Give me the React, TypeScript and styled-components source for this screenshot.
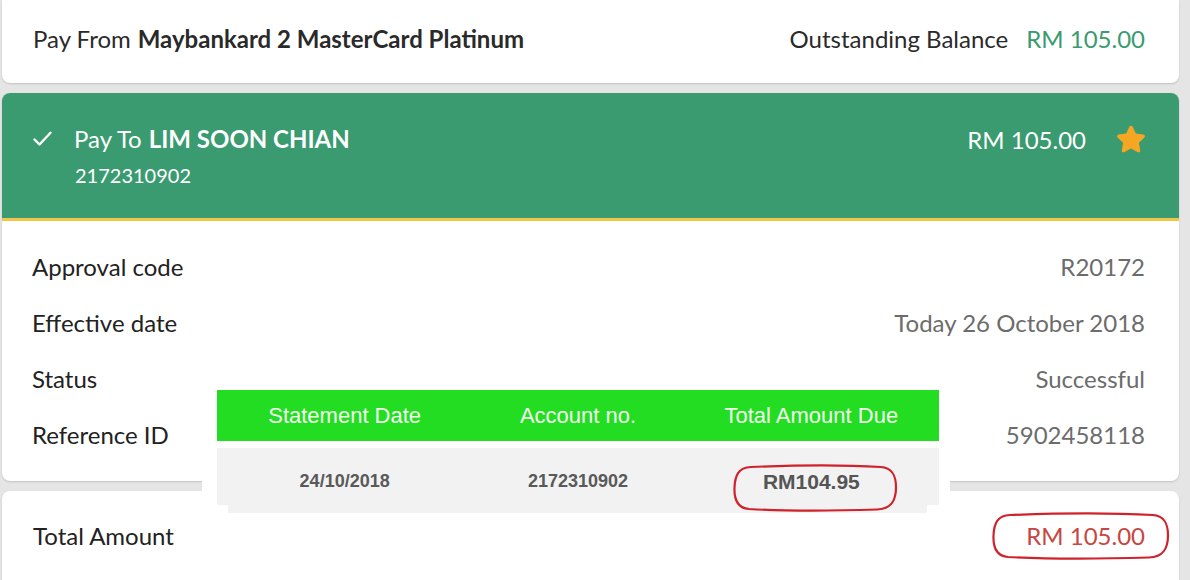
import React from "react";
import styled, { createGlobalStyle } from "styled-components";
import { FaStar } from "react-icons/fa";

const Global = createGlobalStyle`
  html, body { margin: 0; padding: 0; }
  body {
    background: #e5e5e5;
    font-family: Lato, "Open Sans", sans-serif;
    overflow: hidden;
  }
`;

const Page = styled.div`
  position: relative;
  width: 1190px;
  height: 580px;
  overflow: hidden;
  padding-left: 2px;
  box-sizing: border-box;
`;

const Stack = styled.div`
  width: 1177px;
  display: flex;
  flex-direction: column;
  gap: 10px;
`;

const Card = styled.div<{ $top?: boolean }>`
  background: #fff;
  border-radius: ${(p) => (p.$top ? "0 0 8px 8px" : "8px")};
  box-shadow: 0 1px 2px rgba(0, 0, 0, 0.16);
  overflow: hidden;
`;

const Bar = styled.div<{ $h: number; $pt: number }>`
  height: ${(p) => p.$h}px;
  box-sizing: border-box;
  padding: ${(p) => p.$pt}px 34px 0 31px;
  display: flex;
  justify-content: space-between;
  align-items: flex-start;
  font-size: 24px;
  line-height: 30px;
  color: #2a2a2a;
`;

const Group = styled.div`
  display: flex;
  align-items: baseline;
  gap: 7px;
  white-space: nowrap;
`;

const Strong = styled.span`
  font-weight: 700;
`;

const Amount = styled.span<{ $color: string }>`
  color: ${(p) => p.$color};
  margin-left: 11px;
`;

const Header = styled.div`
  height: 128px;
  box-sizing: border-box;
  background: #3a9a70;
  border-bottom: 3px solid #f0c744;
  padding: 31px 33px 0 30px;
  display: flex;
  justify-content: space-between;
  color: #fff;
`;

const HeaderLeft = styled.div`
  display: flex;
  gap: 22px;
`;

const CheckBox = styled.div`
  height: 30px;
  display: flex;
  align-items: center;
`;

const HeaderText = styled.div`
  display: flex;
  flex-direction: column;
`;

const Title = styled.div`
  font-size: 24px;
  line-height: 30px;
  white-space: nowrap;
  & > span + span { margin-left: 7px; }
`;

const SubTitle = styled.div`
  font-size: 20px;
  line-height: 26px;
  margin-top: 8px;
  padding-left: 1px;
`;

const HeaderRight = styled.div`
  display: flex;
  align-items: center;
  gap: 30px;
  height: 30px;
  font-size: 24px;
`;

const Details = styled.div`
  padding: 17px 34px 19px 30px;
`;

const DetailRow = styled.div`
  height: 56px;
  display: flex;
  align-items: center;
  justify-content: space-between;
  font-size: 24px;
`;

const Label = styled.span`
  color: #222;
`;

const Value = styled.span`
  color: #6c6c6c;
`;

const TotalBar = styled.div`
  height: 100px;
  box-sizing: border-box;
  padding: 30px 34px 0 31px;
  display: flex;
  justify-content: space-between;
  font-size: 24px;
  line-height: 30px;
`;

/* pasted screenshot overlay */
const Overlay = styled.div`
  position: absolute;
  left: 202px;
  top: 382px;
  width: 748px;
  height: 131px;
  background: #fff;
  padding: 8px 11px 0 15px;
  box-sizing: border-box;
  font-family: "Liberation Sans", Arial, sans-serif;
`;

const TableHead = styled.div`
  height: 51px;
  background: #22dd22;
  display: grid;
  grid-template-columns: repeat(3, 1fr);
  padding: 0 11px;
  align-items: center;
  color: #f3fdee;
  font-size: 22px;
  text-align: center;
`;

const TableRow = styled.div`
  position: relative;
  margin-top: 7px;
  height: 57px;
  background: #f2f2f2;
  display: grid;
  grid-template-columns: repeat(3, 1fr);
  padding: 0 11px;
  align-items: center;
  text-align: center;
  color: #595959;
  font-weight: 700;
  font-size: 18px;
  &::after {
    content: "";
    position: absolute;
    left: 11px;
    right: 12px;
    bottom: -8px;
    height: 8px;
    background: #f2f2f2;
  }
`;

const Cell = styled.div<{ $big?: boolean }>`
  font-size: ${(p) => (p.$big ? "21px" : "inherit")};
  color: ${(p) => (p.$big ? "#555" : "inherit")};
  padding-top: 10px;
`;

const Circle = styled.svg`
  position: absolute;
  overflow: visible;
  pointer-events: none;
`;

const Mark = ({ x, y, w, h }: { x: number; y: number; w: number; h: number }) => (
  <Circle style={{ left: x, top: y, width: w, height: h }} viewBox={`0 0 ${w} ${h}`}>
    <path
      d={`M ${18} 3 C ${w * 0.4} 1, ${w * 0.7} 1, ${w - 16} 3 C ${w - 3} 4, ${w - 1} 14, ${w - 1} ${h / 2} C ${w - 1} ${h - 10}, ${w - 6} ${h - 2}, ${w - 20} ${h - 1.5} C ${w * 0.6} ${h}, ${w * 0.3} ${h}, 16 ${h - 2} C 4 ${h - 3}, 1 ${h - 12}, 1.5 ${h / 2} C 2 12, 5 3.5, 18 3 Z`}
      fill="none"
      stroke="#d0222b"
      strokeWidth="2.2"
    />
  </Circle>
);

export default function App() {
  return (
    <>
      <Global />
      <Page>
        <Stack>
          <Card $top>
            <Bar $h={83} $pt={24}>
              <Group>
                <span>Pay From</span>
                <Strong>Maybankard 2 MasterCard Platinum</Strong>
              </Group>
              <Group>
                <span>Outstanding Balance</span>
                <Amount $color="#3a9a70">RM 105.00</Amount>
              </Group>
            </Bar>
          </Card>

          <Card>
            <Header>
              <HeaderLeft>
                <CheckBox>
                  <svg width="20" height="16" viewBox="0 0 20 16">
                    <polyline points="2.5,8.5 7.5,13.5 18.5,1.8" fill="none" stroke="#fff" strokeWidth="2.4" strokeLinecap="round" strokeLinejoin="round" />
                  </svg>
                </CheckBox>
                <HeaderText>
                  <Title>
                    <span>Pay To</span>
                    <Strong>LIM SOON CHIAN</Strong>
                  </Title>
                  <SubTitle>2172310902</SubTitle>
                </HeaderText>
              </HeaderLeft>
              <HeaderRight>
                <span>RM 105.00</span>
                <FaStar size={30} color="#f5a623" />
              </HeaderRight>
            </Header>
            <Details>
              <DetailRow><Label>Approval code</Label><Value>R20172</Value></DetailRow>
              <DetailRow><Label>Effective date</Label><Value>Today 26 October 2018</Value></DetailRow>
              <DetailRow><Label>Status</Label><Value>Successful</Value></DetailRow>
              <DetailRow><Label>Reference ID</Label><Value>5902458118</Value></DetailRow>
            </Details>
          </Card>

          <Card>
            <TotalBar>
              <Label>Total Amount</Label>
              <Amount $color="#c8463f">RM 105.00</Amount>
            </TotalBar>
          </Card>
        </Stack>

        <Overlay>
          <TableHead>
            <div>Statement Date</div>
            <div>Account no.</div>
            <div>Total Amount Due</div>
          </TableHead>
          <TableRow>
            <Cell>24/10/2018</Cell>
            <Cell>2172310902</Cell>
            <Cell $big>RM104.95</Cell>
          </TableRow>
        </Overlay>

        <Mark x={733} y={464} w={164} h={47} />
        <Mark x={992} y={512} w={177} h={47} />
      </Page>
    </>
  );
}
